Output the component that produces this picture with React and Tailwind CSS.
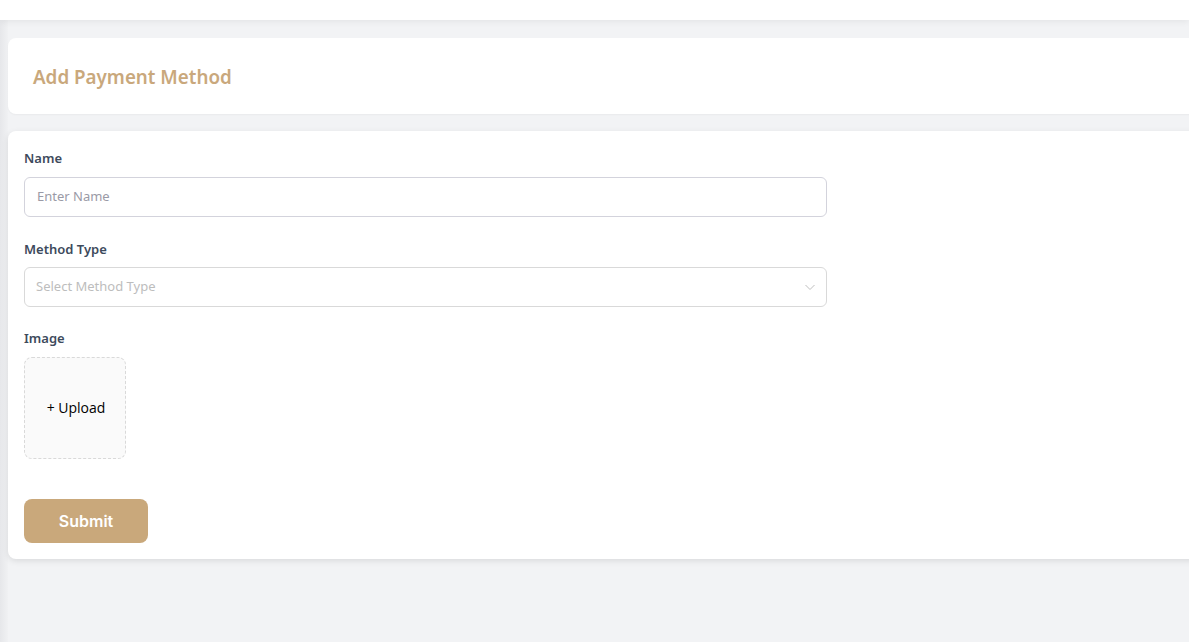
import React from "react";

const ChevronDown = () => (
  <svg width="12" height="12" viewBox="0 0 12 12" fill="none" className="text-[#bfbfbf]">
    <path d="M1.5 4l4.5 4.5L10.5 4" stroke="currentColor" strokeWidth="1" />
  </svg>
);

const App = () => {
  return (
    <div className="relative min-h-[642px] w-full overflow-hidden bg-[#f2f3f5] font-['Noto_Sans',sans-serif]">
      <div className="absolute left-0 top-0 h-full w-2 bg-gradient-to-r from-[#e6e7ea] to-[#f0f1f3]" />
      <div className="relative h-5 bg-white shadow-[0_2px_6px_rgba(0,0,0,0.06)]" />

      <div className="relative ml-2 -mr-6 mt-[18px]">
        <div className="flex h-[76px] items-center rounded-lg bg-white px-[25px] pt-[2px] shadow-[0_1px_2px_rgba(0,0,0,0.04)]">
          <h1 className="text-[18.8px] font-semibold text-[#c9a87c]">Add Payment Method</h1>
        </div>

        <div className="mt-[17px] rounded-lg bg-white px-4 pb-4 pt-[18px] shadow-[0_2px_6px_rgba(0,0,0,0.1)]">
          <label className="block text-[13px] font-semibold text-[#3d4a5c]">Name</label>
          <div className="mt-2 flex h-10 w-[803px] items-center rounded-md border border-[#d3d3dc] px-3">
            <span className="text-[13px] text-[#9a9aa6]">Enter Name</span>
          </div>

          <label className="mt-[23px] block text-[13px] font-semibold text-[#3d4a5c]">Method Type</label>
          <div className="mt-2 flex h-10 w-[803px] items-center justify-between rounded-md border border-[#d9d9d9] pl-[11px] pr-[10px]">
            <span className="text-[13px] text-[#bdbdbd]">Select Method Type</span>
            <ChevronDown />
          </div>

          <label className="mt-[22px] block text-[13px] font-semibold text-[#3d4a5c]">Image</label>
          <div className="mt-2 flex h-[102px] w-[102px] items-center justify-center rounded-lg border border-dashed border-[#d9d9d9] bg-[#fafafa]">
            <span className="pl-[2px] font-['Open_Sans',sans-serif] text-[14px] text-black">+ Upload</span>
          </div>

          <button className="mt-10 h-11 w-[124px] rounded-lg bg-[#c9a87b] font-['Inter',sans-serif] text-[16px] font-semibold text-white">
            Submit
          </button>
        </div>
      </div>
    </div>
  );
};

export default App;
